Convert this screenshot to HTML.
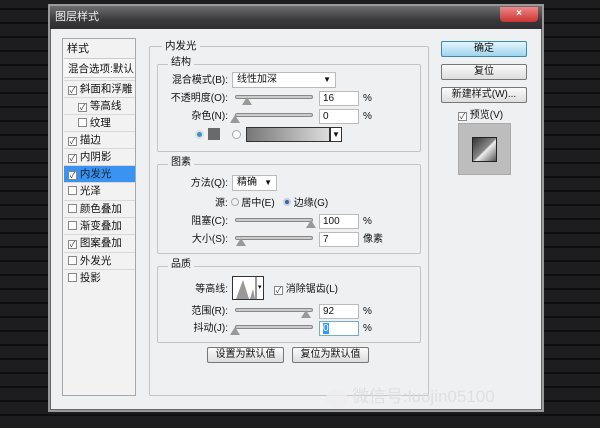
<!DOCTYPE html><html><head><meta charset="utf-8"><style>
*{margin:0;padding:0;box-sizing:border-box}
body{width:600px;height:428px;overflow:hidden;background:#151517;font-family:"Liberation Sans","Noto Sans CJK SC",sans-serif;font-size:10px;line-height:12px;color:#111;position:relative}
.a{position:absolute;white-space:nowrap}
.bg{position:absolute;inset:0;background:repeating-linear-gradient(0deg,#1d1d1f 0 12px,#0e0e0f 12px 14px)}
.dlg{left:50px;top:6px;width:492px;height:404px;background:#eef0f2;border:1px solid #666;box-shadow:0 0 0 2px #999}
.title{left:50px;top:6px;width:492px;height:23px;background:linear-gradient(#6e6e70,#3a3a3c 60%,#2e2e30)}
.box{border:1px solid #a8a8a8;background:#f2f2f2}
.grp{border:1px solid #c4c4c4;border-radius:2px}
.cb{width:9px;height:9px;border:1px solid #888;background:#fff;display:inline-block;font-size:8px;line-height:7px;text-align:center;color:#333;vertical-align:-1px}
.row{left:64px;width:71px;height:17px;border-top:1px solid #d8d8d8;padding:2px 0 0 4px;font-size:10.5px}
.sl{height:4px;border:1px solid #888;background:#ccc;border-radius:2px}
.th{width:0;height:0;border-left:5px solid transparent;border-right:5px solid transparent;border-bottom:8px solid #999}
.in{height:15px;background:#fff;border:1px solid #bbb;padding:1px 3px;font-size:10px}
.btn{height:16px;border:1px solid #777;border-radius:2px;background:linear-gradient(#fafafa,#ddd);text-align:center;font-size:10px;line-height:14px}
.lb{text-align:right;width:80px}
.sel{height:16px;background:#fff;border:1px solid #bbb;padding:1px 4px}
</style></head><body>
<div class="bg"></div>
<div class="a dlg"></div>
<div class="a title"></div>
<div class="a" style="left:55px;top:11px;color:#eee;font-size:11px">图层样式</div>
<div class="a" style="left:500px;top:7px;width:38px;height:15px;background:linear-gradient(#e88,#c33);border-radius:0 0 4px 4px;color:#fff;text-align:center;font-weight:bold;line-height:14px">×</div>

<div class="a box" style="left:62px;top:38px;width:74px;height:358px"></div>
<div class="a" style="left:67px;top:43px;font-size:11px">样式</div>
<div class="a row" style="top:58px;height:20px;padding-top:4px;font-size:10.5px;border-top:1px solid #ccc;border-bottom:1px solid #ccc;background:#f7f7f7">混合选项:默认</div>
<div class="a row" style="top:80px"><span class="cb">✓</span> 斜面和浮雕</div>
<div class="a row" style="top:97px;padding-left:14px"><span class="cb">✓</span> 等高线</div>
<div class="a row" style="top:114px;padding-left:14px"><span class="cb"></span> 纹理</div>
<div class="a row" style="top:131px"><span class="cb">✓</span> 描边</div>
<div class="a row" style="top:148px"><span class="cb">✓</span> 内阴影</div>
<div class="a row" style="top:165px;background:#3a93f0;color:#123"><span class="cb">✓</span> 内发光</div>
<div class="a row" style="top:182px"><span class="cb"></span> 光泽</div>
<div class="a row" style="top:200px"><span class="cb"></span> 颜色叠加</div>
<div class="a row" style="top:217px"><span class="cb"></span> 渐变叠加</div>
<div class="a row" style="top:234px"><span class="cb">✓</span> 图案叠加</div>
<div class="a row" style="top:252px"><span class="cb"></span> 外发光</div>
<div class="a row" style="top:269px"><span class="cb"></span> 投影</div>

<div class="a grp" style="left:149px;top:46px;width:280px;height:350px"></div>
<div class="a" style="left:162px;top:40px;background:#eef0f2;padding:0 3px;font-size:10.5px">内发光</div>
<div class="a grp" style="left:157px;top:64px;width:264px;height:88px"></div>
<div class="a" style="left:168px;top:57px;background:#eef0f2;padding:0 3px">结构</div>
<div class="a lb" style="left:148px;top:75px">混合模式(B):</div>
<div class="a sel" style="left:232px;top:72px;width:104px">线性加深<span style="float:right;font-size:8px">▼</span></div>
<div class="a lb" style="left:148px;top:93px">不透明度(O):</div>
<div class="a sl" style="left:235px;top:95px;width:78px"></div><div class="a th" style="left:242px;top:97px"></div>
<div class="a in" style="left:319px;top:91px;width:40px">16</div><div class="a" style="left:363px;top:93px">%</div>
<div class="a lb" style="left:148px;top:111px">杂色(N):</div>
<div class="a sl" style="left:235px;top:113px;width:78px"></div><div class="a th" style="left:230px;top:115px"></div>
<div class="a in" style="left:319px;top:109px;width:40px">0</div><div class="a" style="left:363px;top:111px">%</div>
<div class="a" style="left:195px;top:130px;width:9px;height:9px;border-radius:50%;background:#39c;border:2px solid #ddd"></div>
<div class="a" style="left:208px;top:128px;width:12px;height:12px;background:#6a6a6a"></div>
<div class="a" style="left:232px;top:130px;width:9px;height:9px;border-radius:50%;border:1px solid #aaa;background:#fff"></div>
<div class="a" style="left:246px;top:127px;width:84px;height:15px;border:1px solid #333;background:linear-gradient(90deg,#777,#ddd)"></div>
<div class="a" style="left:330px;top:127px;width:12px;height:15px;border:1px solid #333;background:#fff;font-size:8px;text-align:center;line-height:13px">▼</div>

<div class="a grp" style="left:157px;top:164px;width:264px;height:90px"></div>
<div class="a" style="left:168px;top:157px;background:#eef0f2;padding:0 3px">图素</div>
<div class="a lb" style="left:148px;top:178px">方法(Q):</div>
<div class="a sel" style="left:232px;top:175px;width:45px">精确<span style="float:right;font-size:8px">▼</span></div>
<div class="a" style="left:215px;top:198px">源: <span style="display:inline-block;width:8px;height:8px;border:1px solid #aaa;border-radius:50%"></span> 居中(E) &nbsp;&nbsp;<span style="display:inline-block;width:8px;height:8px;border:2px solid #ccd;background:#36a;border-radius:50%"></span> 边缘(G)</div>
<div class="a lb" style="left:148px;top:216px">阻塞(C):</div>
<div class="a sl" style="left:235px;top:218px;width:78px"></div><div class="a th" style="left:306px;top:220px"></div>
<div class="a in" style="left:319px;top:214px;width:40px">100</div><div class="a" style="left:363px;top:216px">%</div>
<div class="a lb" style="left:148px;top:234px">大小(S):</div>
<div class="a sl" style="left:235px;top:236px;width:78px"></div><div class="a th" style="left:236px;top:238px"></div>
<div class="a in" style="left:319px;top:232px;width:40px">7</div><div class="a" style="left:363px;top:234px">像素</div>

<div class="a grp" style="left:157px;top:266px;width:264px;height:77px"></div>
<div class="a" style="left:168px;top:259px;background:#eef0f2;padding:0 3px">品质</div>
<div class="a lb" style="left:148px;top:284px">等高线:</div>
<div class="a" style="left:232px;top:276px;width:32px;height:24px;border:1px solid #333;background:#fff;overflow:hidden">
<svg width="32" height="24"><polygon points="3,22 10,3 16,22" fill="#999"/><polygon points="17,22 20,12 22,22" fill="#999"/><line x1="23" y1="0" x2="23" y2="24" stroke="#333"/><text x="25" y="12" font-size="7">▾</text></svg></div>
<div class="a" style="left:274px;top:284px"><span class="cb">✓</span> 消除锯齿(L)</div>
<div class="a lb" style="left:148px;top:306px">范围(R):</div>
<div class="a sl" style="left:235px;top:308px;width:78px"></div><div class="a th" style="left:301px;top:310px"></div>
<div class="a in" style="left:319px;top:304px;width:40px">92</div><div class="a" style="left:363px;top:306px">%</div>
<div class="a lb" style="left:148px;top:323px">抖动(J):</div>
<div class="a sl" style="left:235px;top:325px;width:78px"></div><div class="a th" style="left:230px;top:327px"></div>
<div class="a in" style="left:319px;top:321px;width:40px;border-color:#7ab"><span style="background:#39f;color:#fff">0</span></div><div class="a" style="left:363px;top:323px">%</div>

<div class="a btn" style="left:207px;top:347px;width:77px">设置为默认值</div>
<div class="a btn" style="left:292px;top:347px;width:77px">复位为默认值</div>

<div class="a btn" style="left:441px;top:41px;width:86px;background:linear-gradient(#e6f6fd,#9fd4ee);border-color:#3a8ab0">确定</div>
<div class="a btn" style="left:441px;top:64px;width:86px">复位</div>
<div class="a btn" style="left:441px;top:87px;width:86px">新建样式(W)...</div>
<div class="a" style="left:458px;top:110px"><span class="cb">✓</span> 预览(V)</div>
<div class="a" style="left:458px;top:123px;width:53px;height:52px;background:#bdbdbd;border:1px solid #aaa"></div>
<div class="a" style="left:472px;top:137px;width:25px;height:25px;background:linear-gradient(135deg,#333,#888 50%,#eee 55%,#555);border:1px solid #222"></div>

<div class="a" style="left:326px;top:390px;width:22px;height:18px;border-radius:50%;background:#eee;opacity:.8"></div>
<div class="a" style="left:352px;top:386px;color:#ddd;font-size:17px;line-height:22px;opacity:.85">微信号:luojin05100</div>
</body></html>
